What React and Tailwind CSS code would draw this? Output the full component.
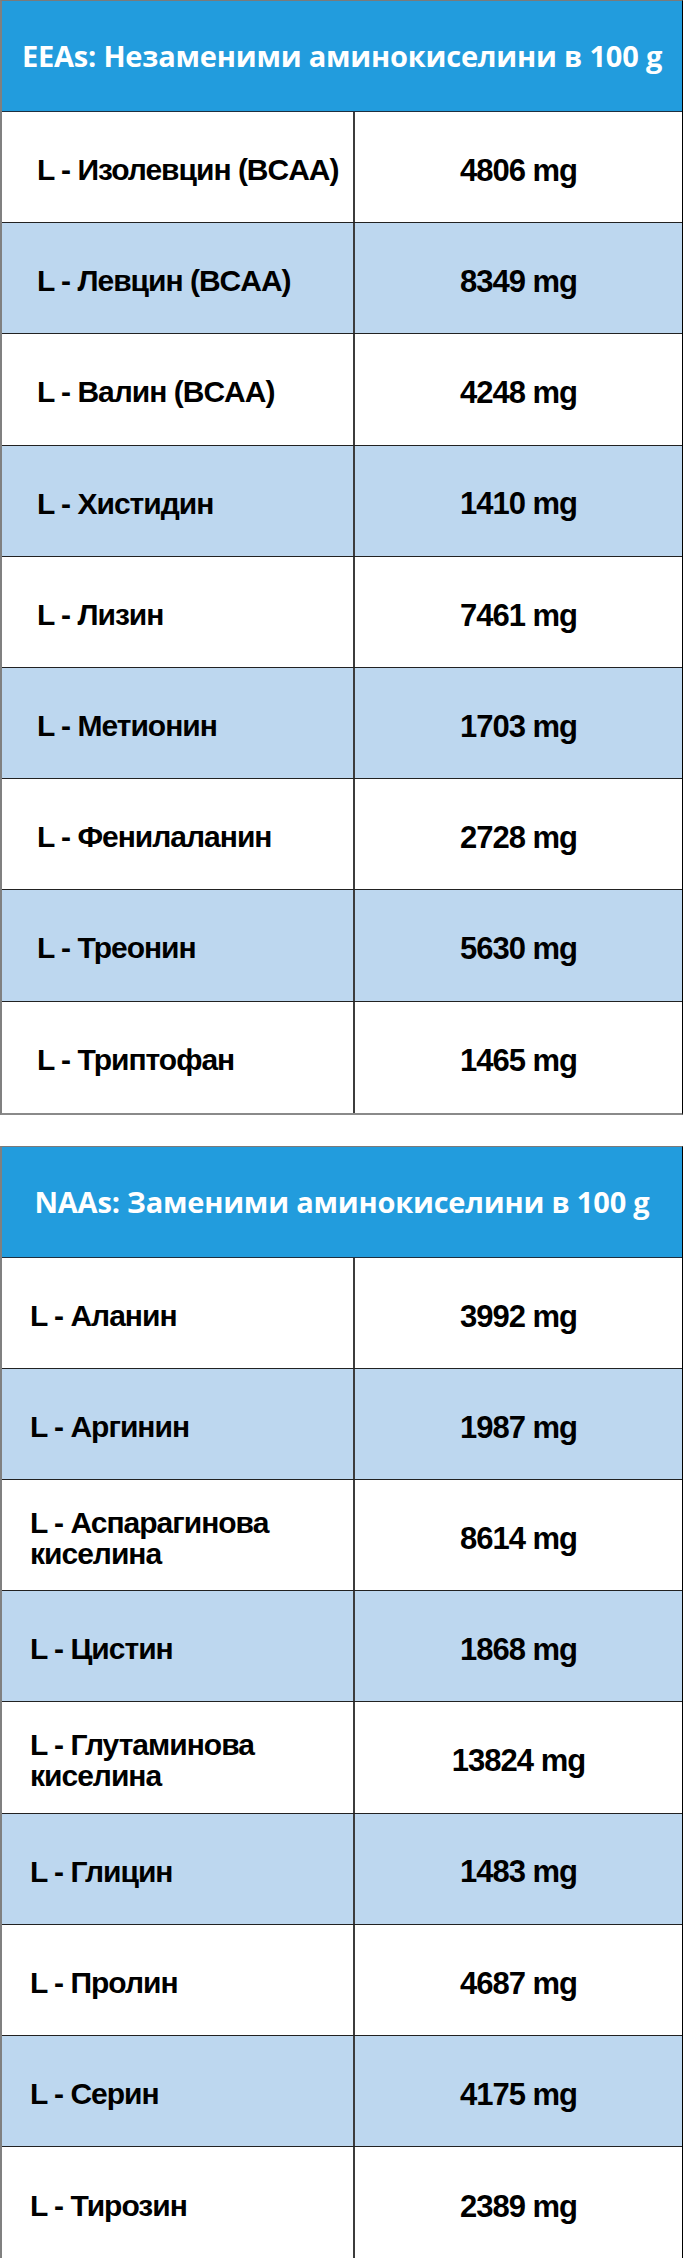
import React from "react";

const eea = [
  ["L - Изолевцин (BCAA)", "4806 mg"],
  ["L - Левцин (BCAA)", "8349 mg"],
  ["L - Валин (BCAA)", "4248 mg"],
  ["L - Хистидин", "1410 mg"],
  ["L - Лизин", "7461 mg"],
  ["L - Метионин", "1703 mg"],
  ["L - Фенилаланин", "2728 mg"],
  ["L - Треонин", "5630 mg"],
  ["L - Триптофан", "1465 mg"],
];

const naa = [
  ["L - Аланин", "3992 mg"],
  ["L - Аргинин", "1987 mg"],
  ["L - Аспарагинова киселина", "8614 mg"],
  ["L - Цистин", "1868 mg"],
  ["L - Глутаминова киселина", "13824 mg"],
  ["L - Глицин", "1483 mg"],
  ["L - Пролин", "4687 mg"],
  ["L - Серин", "4175 mg"],
  ["L - Тирозин", "2389 mg"],
];

const cellFont = { fontFamily: '"Liberation Sans", Arial, sans-serif' };

function Table({ title, rows, padLeft }) {
  return (
    <div className="w-[683px] border-t border-t-[#7a7a7a] border-l-2 border-l-[#808080] border-r border-r-black border-b-2 border-b-[#8a8a8a]">
      <div
        className="h-[111px] bg-[#229cdd] border-b border-b-[#1f2f3f] flex items-center justify-center text-white text-[29px] font-bold tracking-[-0.2px]"
        style={{ fontFamily: '"Open Sans", "Liberation Sans", sans-serif' }}
      >
        {title}
      </div>
      {rows.map(([name, val], i) => (
        <div
          key={i}
          className={`grid grid-cols-[353px_1fr] h-[111.2px] ${i < rows.length - 1 ? "border-b border-b-[#222]" : ""} ${i % 2 === 1 ? "bg-[#bdd7ef]" : "bg-white"}`}
        >
          <div
            className={`border-r-2 border-r-[#3c3c3c] flex items-center ${padLeft} text-black text-[30px] font-bold leading-[31px] tracking-[-1px]`}
            style={cellFont}
          >
            <span className="block pt-[5px]">{name}</span>
          </div>
          <div
            className="flex items-center justify-center text-black text-[31px] font-bold pt-[8px] tracking-[-1px]"
            style={cellFont}
          >
            {val}
          </div>
        </div>
      ))}
    </div>
  );
}

export default function App() {
  return (
    <div className="w-[684px] bg-white flex flex-col gap-[31px]">
      <Table title="EEAs: Незаменими аминокиселини в 100 g" rows={eea} padLeft="pl-[35px]" />
      <Table title="NAAs: Заменими аминокиселини в 100 g" rows={naa} padLeft="pl-[28px]" />
    </div>
  );
}
